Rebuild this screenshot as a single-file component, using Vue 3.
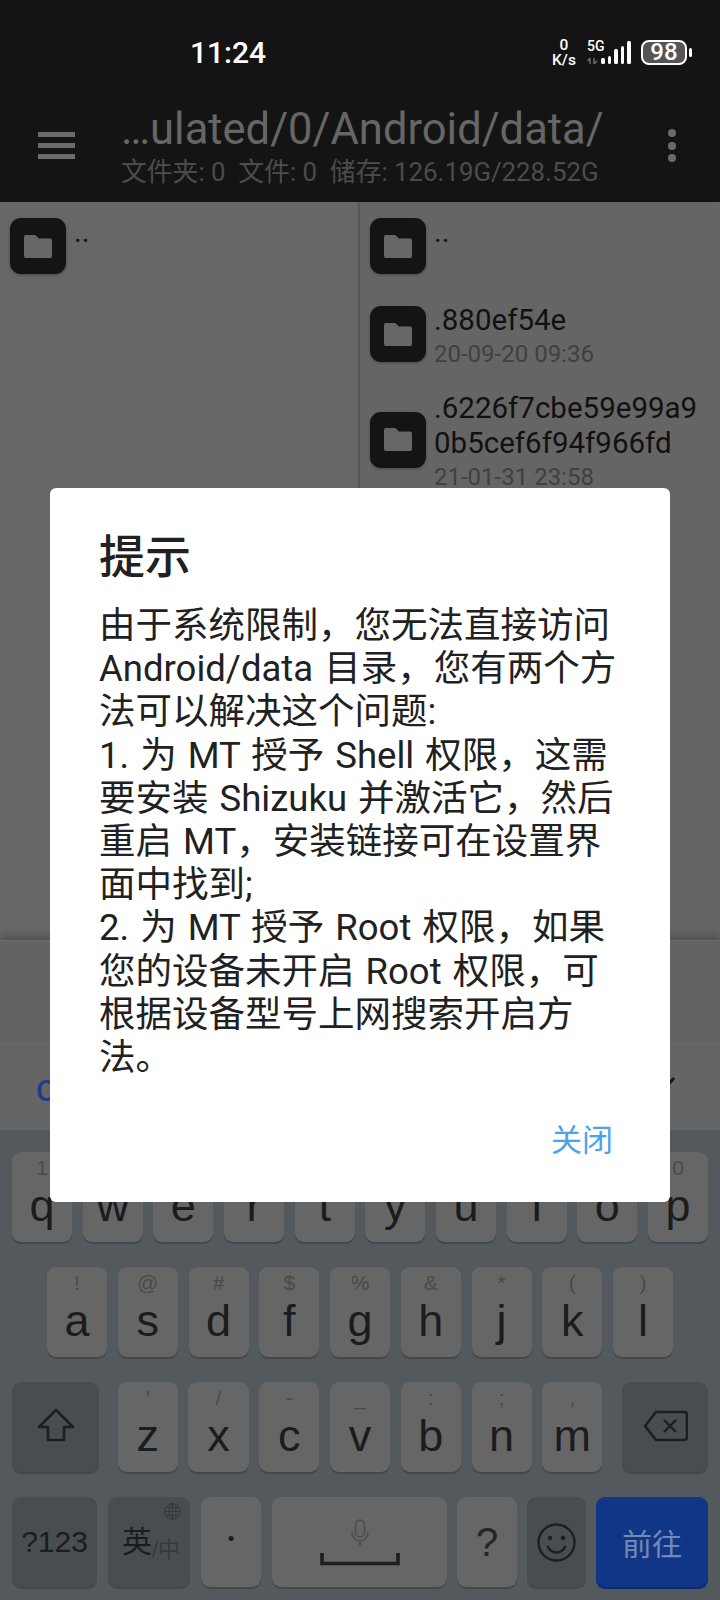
<script setup>
const row1 = [['1','q'],['2','w'],['3','e'],['4','r'],['5','t'],['6','y'],['7','u'],['8','i'],['9','o'],['0','p']]
const row2 = [['!','a'],['@','s'],['#','d'],['$','f'],['%','g'],['&','h'],['*','j'],['(','k'],[')','l']]
const row3 = [["'",'z'],['/','x'],['-','c'],['_','v'],[':','b'],[';','n'],[',','m']]
const lines = [
  '由于系统限制，您无法直接访问',
  'Android/data 目录，您有两个方',
  '法可以解决这个问题:',
  '1. 为 MT 授予 Shell 权限，这需',
  '要安装 Shizuku 并激活它，然后',
  '重启 MT，安装链接可在设置界',
  '面中找到;',
  '2. 为 MT 授予 Root 权限，如果',
  '您的设备未开启 Root 权限，可',
  '根据设备型号上网搜索开启方',
  '法。'
]
const bars = [6.5, 8.5, 15.5, 18.5, 23.5]
</script>

<template>
  <div class="screen">
    <header class="top">
      <div class="status">
        <span class="clock">11:24</span>
        <div class="indicators">
          <div class="speed"><span>0</span><span>K/s</span></div>
          <div class="net">
            <span class="five">5G</span>
            <svg class="arrows" width="11" height="6" viewBox="0 0 11 6"><path d="M3 6V0L0.5 3M7 0v6l3-3" fill="none" stroke="#666" stroke-width="1.6"/></svg>
          </div>
          <div class="bars"><i v-for="b in bars" :key="b" :class="'b' + b * 2"></i></div>
          <div class="battery"><span>98</span></div>
          <i class="nub"></i>
        </div>
      </div>
      <div class="toolbar">
        <div class="menu"><i></i><i></i><i></i></div>
        <div class="heading">
          <div class="path">…ulated/0/Android/data/</div>
          <div class="stats">文件夹: 0&nbsp; 文件: 0&nbsp; 储存: 126.19G/228.52G</div>
        </div>
        <div class="more"><i></i><i></i><i></i></div>
      </div>
    </header>

    <main class="panels">
      <section class="panel left">
        <div class="file">
          <div class="ficon"><svg width="28" height="23" viewBox="0 0 28 23"><path d="M2 0h8.5q1.2 0 2 .9L15 3.5h11q2 0 2 2V21q0 2-2 2H2q-2 0-2-2V2q0-2 2-2z" fill="#666"/></svg></div>
          <div class="ftext"><div class="name">..</div><div class="date">&nbsp;</div></div>
        </div>
      </section>
      <section class="panel right">
        <div class="file">
          <div class="ficon"><svg width="28" height="23" viewBox="0 0 28 23"><path d="M2 0h8.5q1.2 0 2 .9L15 3.5h11q2 0 2 2V21q0 2-2 2H2q-2 0-2-2V2q0-2 2-2z" fill="#666"/></svg></div>
          <div class="ftext"><div class="name">..</div><div class="date">&nbsp;</div></div>
        </div>
        <div class="file">
          <div class="ficon"><svg width="28" height="23" viewBox="0 0 28 23"><path d="M2 0h8.5q1.2 0 2 .9L15 3.5h11q2 0 2 2V21q0 2-2 2H2q-2 0-2-2V2q0-2 2-2z" fill="#666"/></svg></div>
          <div class="ftext"><div class="name">.880ef54e</div><div class="date">20-09-20 09:36</div></div>
        </div>
        <div class="file">
          <div class="ficon"><svg width="28" height="23" viewBox="0 0 28 23"><path d="M2 0h8.5q1.2 0 2 .9L15 3.5h11q2 0 2 2V21q0 2-2 2H2q-2 0-2-2V2q0-2 2-2z" fill="#666"/></svg></div>
          <div class="ftext"><div class="name">.6226f7cbe59e99a9<br>0b5cef6f94f966fd</div><div class="date">21-01-31 23:58</div></div>
        </div>
      </section>
    </main>

    <div class="bar-a"></div>
    <div class="bar-b">
      <span class="cancel">C</span>
      <svg class="check" width="40" height="30" viewBox="0 0 40 30"><path d="M4 18l10 10L36 3" fill="none" stroke="#161616" stroke-width="3"/></svg>
    </div>

    <div class="keyboard">
      <div class="row r1">
        <div v-for="k in row1" :key="k[1]" class="key"><span class="hint">{{ k[0] }}</span><span class="letter">{{ k[1] }}</span></div>
      </div>
      <div class="row r2">
        <div v-for="k in row2" :key="k[1]" class="key"><span class="hint">{{ k[0] }}</span><span class="letter">{{ k[1] }}</span></div>
      </div>
      <div class="row r3">
        <div class="key fn shift">
          <svg width="38" height="34" viewBox="0 0 38 34"><path d="M19 2L2 19h9v13h16V19h9z" fill="none" stroke="#1c1e20" stroke-width="2.6" stroke-linejoin="round"/></svg>
        </div>
        <div class="letters">
          <div v-for="k in row3" :key="k[1]" class="key"><span class="hint">{{ k[0] }}</span><span class="letter">{{ k[1] }}</span></div>
        </div>
        <div class="key fn del">
          <svg width="44" height="32" viewBox="0 0 44 32"><path d="M12 2h28q3 0 3 3v22q0 3-3 3H12L1 16z" fill="none" stroke="#1c1e20" stroke-width="2.6" stroke-linejoin="round"/><path d="M20 10l12 12M32 10L20 22" fill="none" stroke="#1c1e20" stroke-width="2.4"/></svg>
        </div>
      </div>
      <div class="row r4">
        <div class="key fn sym">?123</div>
        <div class="key fn lang">
          <svg class="globe" width="17" height="17" viewBox="0 0 17 17"><g fill="none" stroke="#35383c" stroke-width=".9"><circle cx="8.5" cy="8.5" r="7.8"/><ellipse cx="8.5" cy="8.5" rx="3.6" ry="7.8"/><path d="M8.5 .7v15.6M.7 8.5h15.6M1.8 4.6h13.4M1.8 12.4h13.4"/></g></svg>
          <span class="ying">英</span><span class="zh">/中</span>
        </div>
        <div class="key plain dot">•</div>
        <div class="key plain space">
          <svg class="mic" width="18" height="28" viewBox="0 0 18 28"><g fill="none" stroke="#4d4d4d" stroke-width="1.6"><rect x="4.5" y="1" width="9" height="17" rx="4.5"/><path d="M1 13c0 5.5 3.5 9 8 9s8-3.500 8-9M9 22v5"/></g></svg>
          <svg class="bracket" width="80" height="13" viewBox="0 0 80 13"><path d="M2 0v10.500h76V0" fill="none" stroke="#1c1e20" stroke-width="3.600"/></svg>
        </div>
        <div class="key plain ask">?</div>
        <div class="key fn emoji">
          <svg width="39" height="39" viewBox="0 0 39 39"><circle cx="19.500" cy="19.500" r="18" fill="none" stroke="#1c1e20" stroke-width="2.400"/><circle cx="13" cy="15" r="2.200" fill="#1c1e20"/><circle cx="26" cy="15" r="2.200" fill="#1c1e20"/><path d="M10.500 23c2 4.500 5.500 6.500 9 6.500s7-2 9-6.500" fill="none" stroke="#1c1e20" stroke-width="2.400"/></svg>
        </div>
        <div class="key go">前往</div>
      </div>
    </div>

    <div class="dialog">
      <h2 class="title">提示</h2>
      <div class="body"><div v-for="l in lines" :key="l">{{ l }}</div></div>
      <div class="actions"><span class="close">关闭</span></div>
    </div>
  </div>
</template>

<style scoped>
.screen {
  position: relative;
  width: 720px;
  height: 1600px;
  overflow: hidden;
  display: flex;
  flex-direction: column;
  background: #666;
  font-family: Roboto, "Noto Sans CJK SC", sans-serif;
}
.top { height: 202px; background: #141414; flex: none; }
.status { height: 100px; position: relative; }
.clock {
  position: absolute; left: 190px; top: 34px;
  color: #fff; font-size: 30px; font-weight: 500; line-height: 38px;
}
.indicators { position: absolute; left: 551px; top: 38px; width: 146px; height: 29px; color: #fff; display: flex; }
.speed { width: 26px; display: flex; flex-direction: column; align-items: center; font-size: 15.500px; line-height: 15px; font-weight: 500; }
.net { width: 24px; margin-left: 10px; padding-top: 1px; display: flex; flex-direction: column; }
.five { font-size: 14px; line-height: 15px; font-weight: 500; }
.arrows { margin-top: 4px; }
.bars { position: absolute; left: 50px; bottom: 3px; display: flex; align-items: flex-end; gap: 3px; }
.bars i { width: 3.500px; background: #fff; border-radius: 1.500px; display: block; }
.b13 { height: 6.500px; } .b17 { height: 8.500px; } .b31 { height: 15.500px; } .b37 { height: 18.500px; } .b47 { height: 23.500px; }
.battery {
  position: absolute; left: 90px; top: 2px; width: 46px; height: 25px; box-sizing: border-box;
  border: 2px solid #fff; border-radius: 8px; background: #555;
  display: flex; align-items: center; justify-content: center;
  font-size: 24px; font-weight: 500; line-height: 21px;
}
.nub { position: absolute; left: 138px; top: 10px; width: 3px; height: 9px; background: #fff; border-radius: 1.500px; }
.toolbar { height: 102px; position: relative; display: flex; }
.menu { width: 121px; flex: none; padding: 32px 0 0 38px; box-sizing: border-box; display: flex; flex-direction: column; gap: 6.500px; }
.menu i { width: 37px; height: 4.500px; background: #6b6b6b; display: block; }
.heading { flex: 1; min-width: 0; }
.path { color: #666; font-size: 43.500px; line-height: 50px; margin-top: 5px; white-space: nowrap; }
.stats { color: #4c4c4c; font-size: 25.800px; line-height: 34px; margin-top: 0; white-space: nowrap; }
.more { width: 52px; flex: none; padding-top: 29px; display: flex; flex-direction: column; gap: 4.500px; }
.more i { width: 8px; height: 8px; border-radius: 50%; background: #6b6b6b; display: block; }
.panels { height: 738px; flex: none; display: flex; position: relative; box-shadow: inset 0 5px 4px -4px rgba(0,0,0,.35); }
.panel { padding: 10px 0 0 10px; display: flex; flex-direction: column; gap: 20px; box-sizing: border-box; }
.left { width: 360px; background: #676767; }
.right { width: 360px; background: #656565; box-shadow: -1px 0 3px rgba(0,0,0,.3); }
.file { display: flex; align-items: center; gap: 8px; }
.ficon {
  width: 56px; height: 56px; border-radius: 11px; background: #141414; flex: none;
  display: flex; align-items: center; justify-content: center;
  box-shadow: 0 1px 3px rgba(0,0,0,.3);
}
.ficon svg { display: block; margin-left: -1px; }
.ftext { padding-top: 3px; margin-bottom: -3px; }
.name { font-size: 29.500px; line-height: 35px; color: #111; white-space: nowrap; }
.date { font-size: 24px; line-height: 33px; color: #404040; white-space: nowrap; }
.bar-a { height: 103px; flex: none; background: #636363; border-top: 1px solid #6c6c6c; box-sizing: border-box; box-shadow: 0 -4px 8px rgba(0,0,0,.22); position: relative; }
.bar-b { height: 87px; flex: none; background: #656565; border-top: 1px solid #6c6c6c; box-sizing: border-box; display: flex; justify-content: space-between; padding: 25px 42px 0 36px; position: relative; }
.cancel { color: #1c3d8f; font-size: 30px; line-height: 44px; font-weight: 500; }
.check { margin-top: 6px; }
.keyboard { height: 470px; flex: none; background: #54595e; box-sizing: border-box; padding: 22px 12px 0; display: flex; flex-direction: column; gap: 25px; font-family: "Liberation Sans", "Noto Sans CJK SC", sans-serif; }
.row { display: flex; gap: 10.700px; height: 90px; }
.r2 { padding: 0 35px; }
.key {
  position: relative; flex: none; width: 60px; height: 90px; box-sizing: border-box;
  background: #666; border-radius: 9px; box-shadow: 0 2px 0 #44484c;
  display: flex; flex-direction: column; align-items: center; color: #1a1c1e;
}
.r1 .key, .r2 .key, .letters .key { flex: 1; width: auto; min-width: 0; }
.hint { font-size: 21px; line-height: 30px; padding-top: 1px; color: #4a4a4a; }
.letter { font-size: 45px; line-height: 50px; margin-top: -2px; }
.letters { display: flex; gap: 10.700px; flex: 1; }
.fn { background: #494d52; }
.shift { width: 87px; margin-right: 8px; justify-content: center; }
.shift svg { margin-top: -4px; }
.del { width: 86px; margin-left: 9px; justify-content: center; }
.del svg { margin-left: 2px; margin-top: -2px; }
.r4 { gap: 10px; }
.sym { width: 85px; margin-right: 1px; justify-content: center; font-size: 30px; }
.lang { width: 82px; margin-right: 1px; flex-direction: row; justify-content: flex-start; padding: 27px 0 0 14px; align-items: flex-start; }
.globe { position: absolute; right: 9px; top: 6px; }
.ying { font-size: 30px; line-height: 36px; }
.zh { font-size: 22px; line-height: 30px; color: #36393c; margin-top: 11px; }
.plain { justify-content: center; }
.dot { width: 60px; margin-right: 1px; font-size: 19px; padding-bottom: 6px; }
.space { width: 175px; }
.mic { position: absolute; left: 79px; top: 22px; }
.bracket { position: absolute; left: 48px; top: 56px; }
.ask { width: 60px; font-size: 40px; color: #232527; }
.emoji { width: 59px; justify-content: center; }
.go { width: 112px; background: #123687; box-shadow: 0 2px 0 #0d2a6c; color: #7189b3; font-family: "Noto Sans CJK SC", sans-serif; font-size: 30px; justify-content: center; }
.dialog {
  position: absolute; left: 50px; top: 488px; width: 620px; height: 714px;
  background: #fff; border-radius: 6px; box-sizing: border-box; padding: 35px 0 0 49px;
}
.title { margin: 0; font-size: 46px; line-height: 60px; font-weight: 500; color: #212121; font-family: "Noto Sans CJK SC", sans-serif; }
.body { margin-top: 21px; font-size: 36.500px; line-height: 43.200px; color: #212121; white-space: nowrap; word-spacing: 2px; }
.actions { position: absolute; right: 57px; top: 636px; line-height: 28px; }
.close { font-size: 31px; line-height: 28px; color: #4ba3e8; font-family: "Noto Sans CJK SC", sans-serif; }
</style>
